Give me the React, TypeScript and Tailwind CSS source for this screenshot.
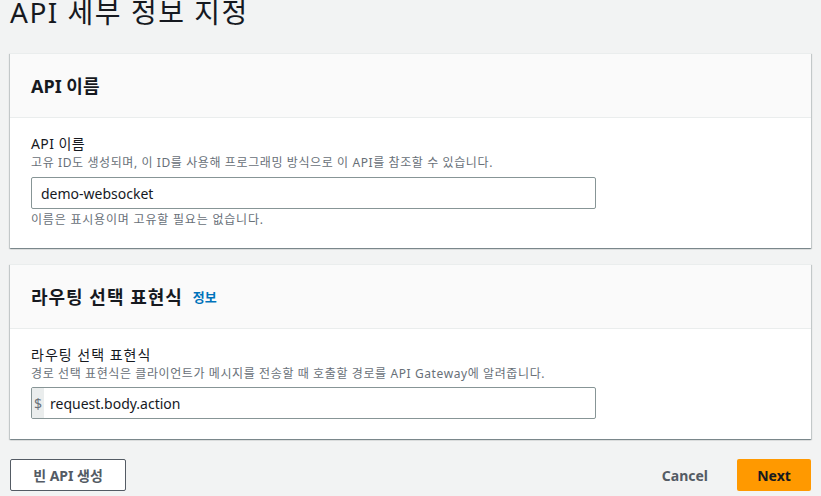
import React from 'react';

const font = { fontFamily: '"Noto Sans", "Noto Sans CJK KR", sans-serif' };

const cardShadow =
  'bg-white border-t border-[#eaeded] shadow-[0_1px_1px_0_rgba(0,28,36,0.3),1px_1px_1px_0_rgba(0,28,36,0.15),-1px_1px_1px_0_rgba(0,28,36,0.15)]';

const Card: React.FC<{ title: string; info?: boolean; titleClass?: string; children: React.ReactNode }> = ({
  title,
  info,
  titleClass = '',
  children,
}) => (
  <div className={cardShadow}>
    <div className="h-[64px] bg-[#fafafa] border-b border-[#eaeded] px-[21px] flex items-center">
      <h2 className={`text-[18px] font-bold text-[#16191f] leading-[22px] ${titleClass}`}>{title}</h2>
      {info && <a className="ml-[10px] text-[13px] font-bold text-[#0073bb] mt-[2px]">정보</a>}
    </div>
    <div className="px-[21px] pt-[16px] pb-[20px]">{children}</div>
  </div>
);

export default function App() {
  return (
    <div className="w-[821px] h-[496px] bg-[#f2f3f3] overflow-hidden px-[10px]" style={font}>
      {/* page title */}
      <h1 className="text-[28px] leading-[36px] text-[#16191f] mt-[-6px] mb-[23px] font-normal tracking-[1.5px]">
        API 세부 정보 지정
      </h1>

      <div className="flex flex-col gap-[16px]">
        <Card title="API 이름">
          <div className="text-[14px] leading-[20px] text-[#16191f] tracking-[0.4px]">API 이름</div>
          <div className="text-[12px] leading-[16px] text-[#687078] mt-[1px] tracking-[0.6px]">
            고유 ID도 생성되며, 이 ID를 사용해 프로그래밍 방식으로 이 API를 참조할 수 있습니다.
          </div>
          <div className="mt-[6px] w-[565px] h-[32px] border border-[#879596] rounded-[2px] bg-white flex items-center px-[9px] text-[14px] text-[#16191f]">
            demo-websocket
          </div>
          <div className="text-[12px] leading-[16px] text-[#687078] mt-[3px] tracking-[0.8px]">이름은 표시용이며 고유할 필요는 없습니다.</div>
        </Card>

        <Card title="라우팅 선택 표현식" info titleClass="tracking-[1px]">
          <div className="text-[14px] leading-[20px] text-[#16191f] tracking-[1px]">라우팅 선택 표현식</div>
          <div className="text-[12px] leading-[16px] text-[#687078] mt-[1px] tracking-[0.6px]">
            경로 선택 표현식은 클라이언트가 메시지를 전송할 때 호출할 경로를 API Gateway에 알려줍니다.
          </div>
          <div className="mt-[5px] w-[565px] h-[32px] border border-[#879596] rounded-[2px] bg-white flex items-stretch text-[14px] text-[#16191f] overflow-hidden">
            <span className="w-[12px] bg-[#eaeded] text-[#687078] flex items-center justify-center">$</span>
            <span className="flex items-center pl-[6px]">request.body.action</span>
          </div>
        </Card>
      </div>

      {/* footer actions */}
      <div className="mt-[20px] flex items-center">
        <button className="w-[116px] h-[32px] border border-[#545b64] rounded-[2px] bg-white text-[14px] font-bold text-[#545b64]">
          빈 API 생성
        </button>
        <div className="ml-auto flex items-center gap-[8px]">
          <button className="h-[32px] px-[21px] text-[14px] font-bold text-[#545b64]">Cancel</button>
          <button className="w-[74px] h-[32px] bg-[#ff9900] rounded-[2px] text-[14px] font-bold text-[#16191f]">Next</button>
        </div>
      </div>
    </div>
  );
}
